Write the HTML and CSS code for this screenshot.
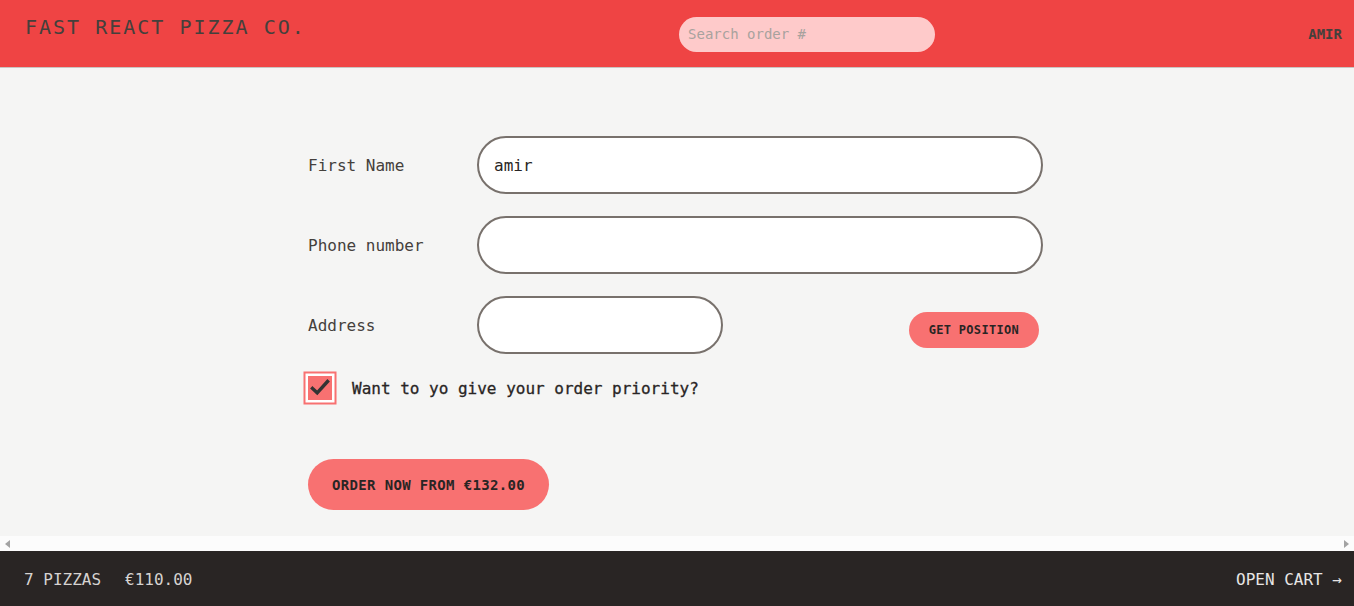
FILE: index.html
```html
<!DOCTYPE html>
<html lang="en">
<head>
<meta charset="utf-8">
<title>Fast React Pizza Co.</title>
<link rel="stylesheet" href="styles.css">
</head>
<body>
<div class="app">
  <header class="header">
    <a class="logo" href="#">Fast React Pizza Co.</a>
    <input class="search" type="text" placeholder="Search order #">
    <div class="username">amir</div>
  </header>

  <main class="main">
    <div class="scroll-area">
      <form class="order-form">
        <div class="row">
          <label class="label">First Name</label>
          <input class="input" type="text" value="amir">
        </div>
        <div class="row">
          <label class="label">Phone number</label>
          <input class="input" type="tel">
        </div>
        <div class="row row-address">
          <label class="label">Address</label>
          <input class="input input-address" type="text">
          <button type="button" class="btn btn-small">Get position</button>
        </div>
        <div class="check-row">
          <span class="checkbox">
            <svg viewBox="0 0 24 24" width="24" height="24"><path d="M4.5 12.5 L9.2 16.8 L19.5 5.5" fill="none" stroke="#333" stroke-width="3.4" stroke-linecap="square" stroke-linejoin="miter"/></svg>
          </span>
          <span class="check-label">Want to yo give your order priority?</span>
        </div>
        <div class="submit-row">
          <button type="button" class="btn btn-primary">Order now from €132.00</button>
        </div>
      </form>
    </div>
    <div class="hscroll">
      <span class="arrow arrow-left"></span>
      <span class="arrow arrow-right"></span>
    </div>
  </main>

  <footer class="cart-bar">
    <p class="cart-summary"><span>7 pizzas</span><span>€110.00</span></p>
    <a class="cart-link" href="#">Open cart &rarr;</a>
  </footer>
</div>
</body>
</html>
```

FILE: styles.css
```css
* { box-sizing: border-box; }

html, body {
  margin: 0;
  padding: 0;
  height: 100%;
}

body {
  font-family: "DejaVu Sans Mono", "Liberation Mono", monospace;
  color: #44403c;
  background: #f5f5f4;
}

.app {
  height: 100vh;
  display: grid;
  grid-template-rows: auto 1fr auto;
}

/* header */
.header {
  height: 68px;
  background: #ef4444;
  border-bottom: 1px solid #c9c4c1;
  display: flex;
  justify-content: space-between;
  align-items: center;
  padding: 0 12px 0 25px;
}

.logo {
  font-size: 20px;
  line-height: 28px;
  letter-spacing: 2px;
  text-transform: uppercase;
  color: #44403c;
  text-decoration: none;
  align-self: flex-start;
  margin-top: 13px;
}

.search {
  width: 256px;
  height: 35px;
  border: none;
  border-radius: 9999px;
  background: #fecaca;
  padding: 0 9px;
  font-family: inherit;
  font-size: 14px;
  color: #44403c;
  outline: none;
  margin-top: 1px;
}
.search::placeholder { color: #a8a29e; }

.username {
  font-size: 14px;
  font-weight: 700;
  text-transform: uppercase;
  color: #44403c;
  margin-top: 1px;
}

/* main */
.main {
  display: flex;
  flex-direction: column;
  overflow: hidden;
  background: #f5f5f4;
}

.scroll-area {
  flex: 1;
  overflow: hidden;
  padding-top: 68px;
}

.order-form {
  width: 735px;
  margin-left: 308px;
}

.row {
  display: flex;
  align-items: center;
  margin-bottom: 22px;
}

.label {
  flex: 0 0 169px;
  font-size: 16px;
  color: #44403c;
}

.input {
  flex: 1;
  height: 58px;
  border: 2px solid #78716c;
  border-radius: 9999px;
  background: #fff;
  padding: 0 15px;
  font-family: inherit;
  font-size: 16px;
  color: #292524;
  outline: none;
}

.input-address {
  flex: 0 0 246px;
}

.row-address { margin-bottom: 22px; }

.btn {
  border: none;
  border-radius: 9999px;
  background: #f87171;
  color: #292524;
  font-family: inherit;
  font-weight: 700;
  text-transform: uppercase;
  cursor: pointer;
}

.btn-small {
  align-self: flex-start;
  margin: 16px 4px 0 auto;
  height: 36px;
  padding: 0 20px;
  font-size: 12px;
  letter-spacing: 0.3px;
}

.check-row {
  display: flex;
  align-items: center;
  gap: 20px;
  height: 24px;
}

.checkbox {
  width: 24px;
  height: 24px;
  background: #f87171;
  display: flex;
  box-shadow: 0 0 0 2.5px #fff, 0 0 0 4.5px #f87171;
}
.checkbox svg { display: block; }

.check-label {
  font-size: 16px;
  color: #292524;
  -webkit-text-stroke: 0.3px #292524;
}

.submit-row {
  margin-top: 59px;
}

.btn-primary {
  height: 51px;
  padding: 0 24px;
  font-size: 14px;
  letter-spacing: 0.35px;
}

/* fake horizontal scrollbar */
.hscroll {
  height: 15px;
  background: #fcfcfc;
  display: flex;
  justify-content: space-between;
  align-items: center;
  padding: 0 5px;
}

.arrow {
  width: 0;
  height: 0;
  border-top: 4px solid transparent;
  border-bottom: 4px solid transparent;
}
.arrow-left { border-right: 5px solid #a3a3a3; }
.arrow-right { border-left: 5px solid #a3a3a3; }

/* footer */
.cart-bar {
  height: 55px;
  background: #292524;
  color: #e7e5e4;
  display: flex;
  justify-content: space-between;
  align-items: center;
  padding: 1px 12px 0 24px;
  font-size: 16px;
  text-transform: uppercase;
}

.cart-summary {
  margin: 0;
  display: flex;
  gap: 24px;
  color: #d6d3d1;
}

.cart-link {
  color: #e7e5e4;
  text-decoration: none;
}
```
